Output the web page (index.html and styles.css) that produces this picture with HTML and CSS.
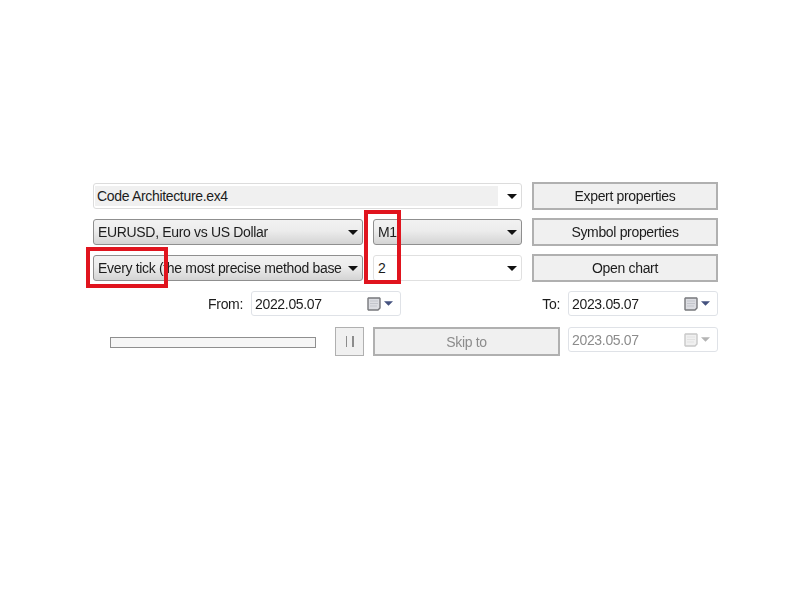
FILE: index.html
```html
<!DOCTYPE html>
<html lang="en">
<head>
<meta charset="utf-8">
<title>Strategy Tester</title>
<link rel="stylesheet" href="styles.css">
</head>
<body>
<main class="panel">
  <div class="grid">
    <div class="combo combo-plain span2">
      <span class="combo-value">Code Architecture.ex4</span>
      <svg class="arrow" viewBox="0 0 12 6"><path d="M0 0H12L6 6Z"/></svg>
    </div>
    <button class="btn btn-side">Expert properties</button>

    <div class="combo combo-raised">
      <span class="combo-text">EURUSD, Euro vs US Dollar</span>
      <svg class="arrow" viewBox="0 0 12 6"><path d="M0 0H12L6 6Z"/></svg>
    </div>
    <div class="combo combo-raised">
      <span class="combo-text">M1</span>
      <svg class="arrow" viewBox="0 0 12 6"><path d="M0 0H12L6 6Z"/></svg>
    </div>
    <button class="btn btn-side">Symbol properties</button>

    <div class="combo combo-raised">
      <span class="combo-text">Every tick (the most precise method base</span>
      <svg class="arrow" viewBox="0 0 12 6"><path d="M0 0H12L6 6Z"/></svg>
    </div>
    <div class="combo combo-white">
      <span class="combo-text">2</span>
      <svg class="arrow" viewBox="0 0 12 6"><path d="M0 0H12L6 6Z"/></svg>
    </div>
    <button class="btn btn-side">Open chart</button>
  </div>

  <div class="date-row">
    <span class="label label-from">From:</span>
    <div class="date">
      <span>2022.05.07</span>
      <span class="cal">
        <svg class="cal-icon" viewBox="0 0 14 14"><path class="cal-page" d="M1.5 1H12.5L13 1.5V11L11 13H1.5L1 12.5V1.5Z"/><path class="cal-lines" d="M3 4H11M3 6.5H11M3 9H10"/></svg>
        <svg class="cal-arrow" viewBox="0 0 8 4"><path d="M0 0H8L4 4Z"/></svg>
      </span>
    </div>
    <span class="label label-to">To:</span>
    <div class="date">
      <span>2023.05.07</span>
      <span class="cal">
        <svg class="cal-icon" viewBox="0 0 14 14"><path class="cal-page" d="M1.5 1H12.5L13 1.5V11L11 13H1.5L1 12.5V1.5Z"/><path class="cal-lines" d="M3 4H11M3 6.5H11M3 9H10"/></svg>
        <svg class="cal-arrow" viewBox="0 0 8 4"><path d="M0 0H8L4 4Z"/></svg>
      </span>
    </div>
  </div>

  <div class="progress-row">
    <div class="progress"></div>
    <button class="btn btn-pause" disabled><span class="pause-bar"></span><span class="pause-bar"></span></button>
    <button class="btn btn-skip" disabled>Skip to</button>
    <div class="date date-disabled">
      <span>2023.05.07</span>
      <span class="cal">
        <svg class="cal-icon" viewBox="0 0 14 14"><path class="cal-page" d="M1.5 1H12.5L13 1.5V11L11 13H1.5L1 12.5V1.5Z"/><path class="cal-lines" d="M3 4H11M3 6.5H11M3 9H10"/></svg>
        <svg class="cal-arrow" viewBox="0 0 8 4"><path d="M0 0H8L4 4Z"/></svg>
      </span>
    </div>
  </div>

  <div class="mark mark-tick"></div>
  <div class="mark mark-period"></div>
</main>
</body>
</html>
```
FILE: styles.css
```css
* { box-sizing: border-box; }
html, body { margin: 0; background: #fff; }
body { width: 800px; height: 600px; overflow: hidden; }
.panel {
  position: relative;
  width: 800px;
  height: 600px;
  padding: 183px 0 0 93px;
  font-family: "Liberation Sans", Arial, sans-serif;
  font-size: 14px;
  letter-spacing: -0.33px;
  color: #1c1c1c;
  filter: blur(0.4px);
}
.grid {
  display: grid;
  grid-template-columns: 270px 149px 186px;
  grid-auto-rows: 26px;
  gap: 10px;
}
.span2 { grid-column: span 2; }
.combo {
  display: flex;
  align-items: center;
  justify-content: space-between;
  padding: 0 3px 0 4px;
  border-radius: 3px;
  min-width: 0;
}
.combo-plain {
  border: 1px solid #dcdcdc;
  background: #fff;
  padding: 2px 3px 2px 1px;
}
.combo-value {
  flex: 0 0 403px;
  align-self: stretch;
  background: #f0f0f0;
  padding-left: 2px;
  line-height: 21px;
}
.combo-raised {
  border: 1px solid #8f8f8f;
  background: linear-gradient(#f2f2f2, #ececec 45%, #d4d4d4);
}
.combo-white {
  border: 1px solid #e0e0e0;
  background: #fff;
}
.combo-text { white-space: nowrap; }
.arrow { width: 10px; height: 5px; margin-right: 1px; flex: none; }
.arrow path { fill: #111; }
.btn {
  font: inherit;
  letter-spacing: inherit;
  color: #1c1c1c;
  border: 2px solid #b0b0b0;
  background: #f0f0f0;
  padding: 0;
}
.btn-side { height: 28px; margin-top: -1px; }
.date-row, .progress-row { display: flex; }
.date-row { margin-top: 10px; height: 25px; align-items: center; }
.label { text-align: right; }
.label-from { width: 158px; padding-right: 8px; }
.label-to { width: 167px; padding-right: 8px; }
.date {
  flex: none;
  width: 150px;
  height: 25px;
  display: flex;
  align-items: center;
  justify-content: space-between;
  padding: 0 7px 0 3px;
  border: 1px solid #dfe2e7;
  border-radius: 3px;
  background: #fff;
}
.cal { display: flex; align-items: center; gap: 3px; }
.cal-icon { width: 14px; height: 14px; }
.cal-page { fill: #dcdde2; stroke: #77787c; stroke-width: 1.4; }
.cal-lines { fill: none; stroke: #c3c5cc; stroke-width: 1; }
.cal-arrow { width: 9px; height: 5px; }
.cal-arrow path { fill: #44527f; }
.progress-row { margin-top: 11px; height: 29px; padding-left: 17px; }
.progress {
  width: 206px;
  height: 11px;
  margin-top: 10px;
  border: 1px solid #8f8f8f;
  background: #f6f6f6;
}
.btn-pause {
  width: 29px;
  height: 29px;
  margin-left: 19px;
  display: flex;
  align-items: center;
  justify-content: center;
  gap: 5px;
  border-width: 1px;
}
.pause-bar { width: 1.5px; height: 11px; background: #8c8c8c; }
.btn-skip {
  width: 187px;
  height: 29px;
  margin-left: 9px;
  color: #8c8c8c;
}
.date-disabled { margin-left: 8px; color: #8c8c8c; }
.date-disabled .cal-page { fill: #f0f0f0; stroke: #c8c8c8; }
.date-disabled .cal-lines { stroke: #e2e2e2; }
.date-disabled .cal-arrow path { fill: #b4b4b4; }
.mark {
  position: absolute;
  border: 4px solid #e0141e;
}
.mark-tick { left: 86px; top: 247px; width: 82px; height: 41px; }
.mark-period { left: 364px; top: 210px; width: 37px; height: 74px; }
```
